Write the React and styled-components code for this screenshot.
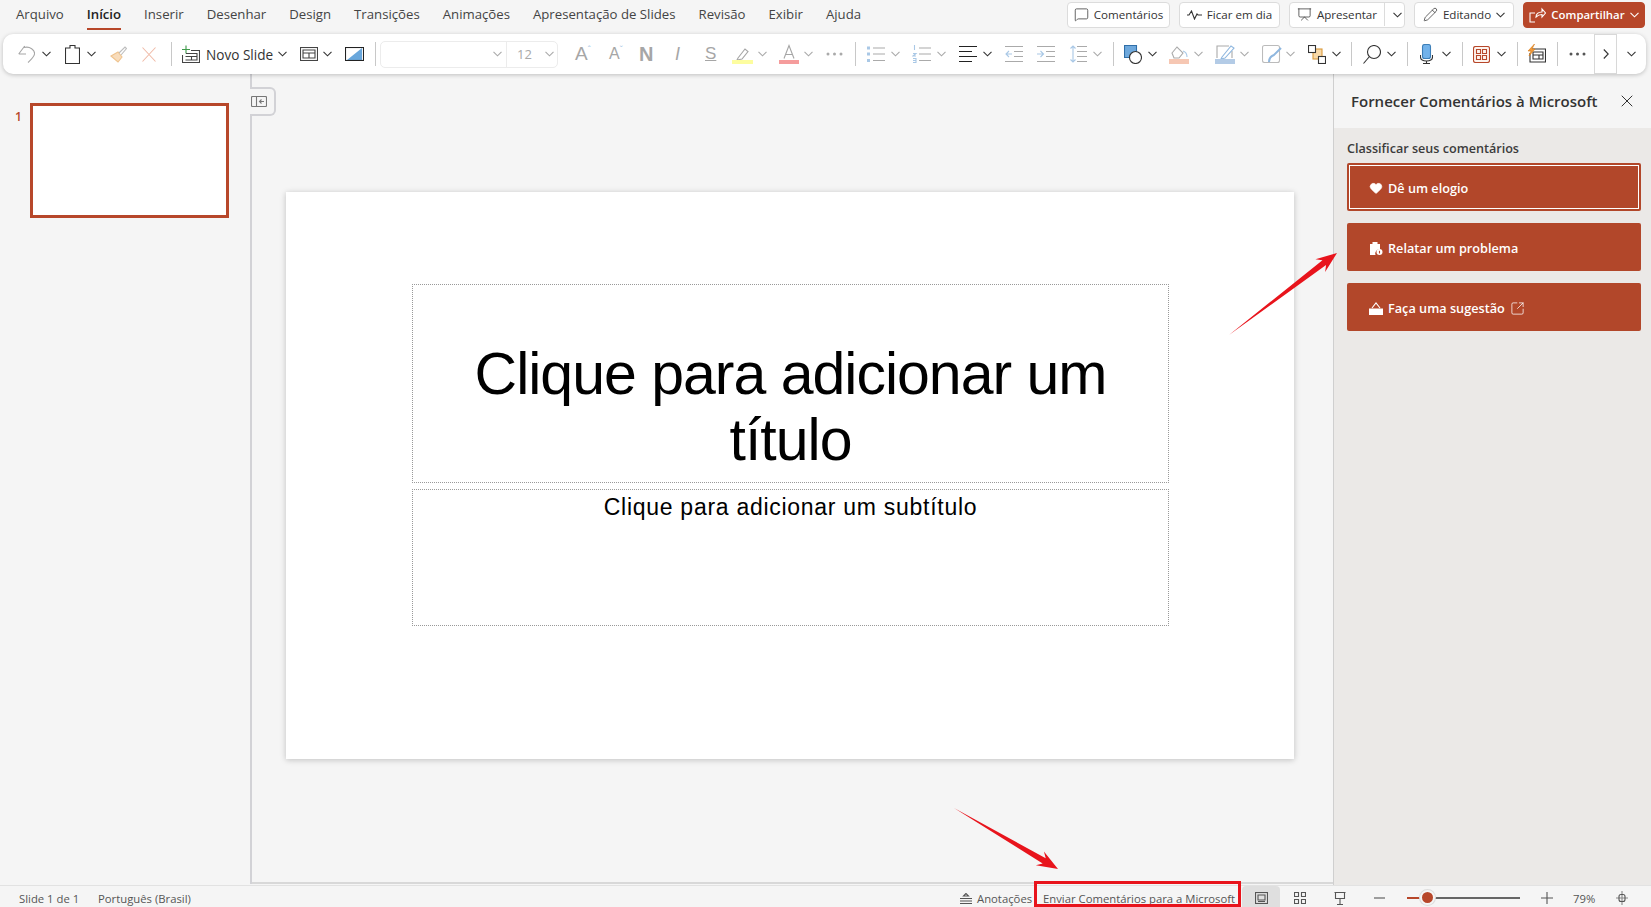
import React from "react";
import styled, { createGlobalStyle } from "styled-components";
import { Heart, X, SquareArrowOutUpRight, MessageSquare, Presentation, Pencil } from "lucide-react";

const UI_FONT = '"Open Sans", "Noto Sans", "Liberation Sans", sans-serif';
const BRAND = "#b7472a";
const DIM = "#a9a9a9";
const DARK = "#333";

const Global = createGlobalStyle`
  html, body { margin: 0; padding: 0; height: 100%; overflow: hidden; background: #f5f5f5; }
  body { font-family: ${UI_FONT}; color: #333; }
  * { box-sizing: border-box; }
`;

const Page = styled.div`
  position: relative;
  width: 1651px;
  height: 907px;
  display: flex;
  flex-direction: column;
  background: #f5f5f5;
  overflow: hidden;
`;

// top menu
const TopBar = styled.div`
  height: 34px;
  flex: none;
  display: flex;
  align-items: flex-start;
  padding: 2px 6px 0 16px;
`;
const Tabs = styled.nav`
  display: flex;
  gap: 23px;
  height: 28px;
  flex: 1;
  padding-top: 1px;
`;
const Tab = styled.div`
  position: relative;
  font-size: 13.2px;
  line-height: 22px;
  color: ${(p) => (p.$active ? "#222" : "#444")};
  font-weight: ${(p) => (p.$active ? 600 : 400)};
  white-space: nowrap;
  ${(p) =>
    p.$active &&
    `&::after { content: ""; position: absolute; left: 0; right: 0; top: 25px; height: 2px; background: ${BRAND}; }`}
`;
const TopActions = styled.div`
  display: flex;
  gap: 9px;
`;
const TopBtn = styled.div`
  height: 26px;
  width: ${(p) => p.$w}px;
  padding-bottom: 1px;
  display: flex;
  align-items: center;
  justify-content: center;
  gap: 5px;
  border: 1px solid #dcdcdc;
  border-radius: 4px;
  background: #fff;
  font-size: 11.6px;
  color: #333;
  white-space: nowrap;
`;
const SplitBtn = styled(TopBtn)`
  padding: 0 0 1px;
  justify-content: flex-start;
`;
const SplitMain = styled.div`
  width: 95px;
  height: 100%;
  display: flex;
  align-items: center;
  justify-content: center;
  gap: 5px;
  border-right: 1px solid #dcdcdc;
`;
const SplitArrow = styled.div`
  flex: 1;
  display: flex;
  align-items: center;
  justify-content: center;
`;
const ShareBtn = styled(TopBtn)`
  background: ${BRAND};
  border-color: ${BRAND};
  color: #fff;
  font-size: 11.4px;
  font-weight: 600;
`;

// ribbon
const Ribbon = styled.div`
  position: relative;
  z-index: 2;
  flex: none;
  height: 40px;
  margin: 0 5px 0 3px;
  padding-left: 15px;
  display: flex;
  align-items: center;
  background: #fff;
  border-radius: 10px;
  box-shadow: 0 1px 4px rgba(0, 0, 0, 0.22);
`;
const Sep = styled.div`
  flex: none;
  width: 1px;
  height: 24px;
  margin-left: ${(p) => p.$gap}px;
  background: #c8c8c8;
`;
const GlyphSvg = styled.svg`
  flex: none;
  display: block;
  margin-left: ${(p) => p.$gap || 0}px;
  fill: none;
  stroke-width: 1.1;
`;
const G = ({ w, h = 20, gap, children }) => (
  <GlyphSvg $gap={gap} width={w} height={h} viewBox={`0 0 ${w} ${h}`}>
    {children}
  </GlyphSvg>
);
const Chev = ({ gap, dim }) => (
  <G w={9} h={6} gap={gap}>
    <path d="M.5 .8 4.500 4.800 8.500 .8" stroke={dim ? DIM : DARK} />
  </G>
);
const RibbonText = styled.span`
  flex: none;
  width: ${(p) => p.$w}px;
  margin-left: ${(p) => p.$gap}px;
  font-size: 13.6px;
  color: #333;
  white-space: nowrap;
`;
const LetterTool = styled.span`
  flex: none;
  width: ${(p) => p.$w}px;
  margin-left: ${(p) => p.$gap}px;
  font-family: "Liberation Sans", sans-serif;
  font-size: ${(p) => p.$size || 18}px;
  font-weight: ${(p) => p.$weight || 400};
  font-style: ${(p) => p.$slant || "normal"};
  text-decoration: ${(p) => p.$deco || "none"};
  line-height: 20px;
  color: #a6a6a6;
  display: flex;
  white-space: nowrap;
`;
const Caret = styled.i`
  font-style: normal;
  font-size: 9px;
  line-height: 11px;
  color: #a9c8e6;
`;
const FontBox = styled.div`
  flex: none;
  width: 178px;
  height: 27px;
  margin-left: 4px;
  display: flex;
  border: 1px solid #ececec;
  border-radius: 5px;
`;
const FontName = styled.div`
  width: 126px;
  display: flex;
  align-items: center;
  justify-content: flex-end;
  padding-right: 4px;
  border-right: 1px solid #ececec;
`;
const FontSize = styled.div`
  flex: 1;
  display: flex;
  align-items: center;
  padding-left: 10px;
  font-size: 13px;
  color: #a9a9a9;
  gap: 13px;
`;
const OverflowBtn = styled.div`
  flex: none;
  width: 23px;
  height: 40px;
  margin-left: 8px;
  display: flex;
  align-items: center;
  justify-content: center;
  border: 1px solid #d8d8d8;
`;

// body
const Body = styled.div`
  flex: 1;
  min-height: 0;
  display: flex;
`;
const ThumbPane = styled.aside`
  position: relative;
  flex: none;
  width: 252px;
  padding: 29px 0 0 15px;
  display: flex;
  gap: 10px;
  border-right: 2px solid #d2d2d6;
  margin-bottom: 1px;
`;
const ThumbNum = styled.div`
  width: 5px;
  font-size: 12px;
  line-height: 27px;
  color: ${BRAND};
  font-weight: 600;
`;
const Thumb = styled.div`
  width: 199px;
  height: 115px;
  background: #fff;
  border: 3px solid ${BRAND};
`;
const CollapseTab = styled.div`
  position: absolute;
  left: 250px;
  top: 13px;
  width: 26px;
  height: 29px;
  display: flex;
  align-items: center;
  padding-left: 1px;
  background: #f5f5f5;
  border: 2px solid #d2d2d6;
  border-left: none;
  border-radius: 0 6px 6px 0;
`;
const Stage = styled.main`
  flex: 1;
  min-width: 0;
  padding: 118px 0 0 34px;
  margin-bottom: 1px;
  border-bottom: 2px solid #d8d8d8;
`;
const Slide = styled.div`
  width: 1008px;
  height: 567px;
  padding: 92px 125px 0 126px;
  display: flex;
  flex-direction: column;
  gap: 6px;
  background: #fff;
  box-shadow: 0 1px 6px rgba(0, 0, 0, 0.22);
`;
const Placeholder = styled.div`
  height: ${(p) => p.$h}px;
  display: flex;
  flex-direction: column;
  align-items: center;
  justify-content: ${(p) => p.$justify};
  padding: 0 30px;
  border: 1px dotted #999;
  font-family: "Liberation Sans", sans-serif;
  text-align: center;
  color: #000;
`;
const Title = styled.div`
  font-size: 59px;
  line-height: 66px;
  letter-spacing: -1px;
  padding-bottom: 9px;
`;
const Subtitle = styled.div`
  font-size: 23px;
  line-height: 35px;
  letter-spacing: 0.72px;
`;

// right pane
const SidePane = styled.aside`
  flex: none;
  width: 318px;
  display: flex;
  flex-direction: column;
  border-left: 1px solid #cfcfcf;
`;
const SideHead = styled.div`
  height: 54px;
  flex: none;
  display: flex;
  align-items: center;
  justify-content: space-between;
  padding: 0 14px 0 17px;
  font-size: 15px;
  font-weight: 600;
  color: #333;
  background: #f5f5f5;
`;
const SideBody = styled.div`
  flex: 1;
  padding: 11px 10px 0 13px;
  display: flex;
  flex-direction: column;
  background: #ebe9e7;
`;
const SideLabel = styled.div`
  font-size: 12.6px;
  font-weight: 600;
  line-height: 20px;
  margin-bottom: 4px;
  color: #3c3c3c;
`;
const ActionList = styled.div`
  display: flex;
  flex-direction: column;
  gap: 12px;
`;
const ActionBtn = styled.div`
  position: relative;
  height: 48px;
  display: flex;
  align-items: center;
  gap: 5px;
  padding: 2px 0 0 22px;
  background: #b2472a;
  border-radius: 2px;
  color: #fff;
  font-size: 12.7px;
  font-weight: 600;
  ${(p) =>
    p.$focused &&
    `&::after { content: ""; position: absolute; inset: 2px; border: 1px solid #fff; }`}
`;

// status bar
const StatusBar = styled.footer`
  flex: none;
  height: 22px;
  display: flex;
  align-items: center;
  padding: 3px 0 0 19px;
  font-size: 11.3px;
  color: #555;
  border-top: 1px solid #e2e2e2;
`;
const StatusText = styled.span`
  flex: none;
  width: ${(p) => p.$w}px;
  margin-left: ${(p) => p.$gap || 0}px;
  white-space: nowrap;
`;
const ViewTab = styled.div`
  flex: none;
  align-self: stretch;
  width: 38px;
  margin: -3px 0 0 7px;
  padding-top: 3px;
  display: flex;
  align-items: center;
  justify-content: center;
  background: #dfdfdf;
  border-radius: 4px 4px 0 0;
`;
const ZoomTrack = styled.div`
  position: relative;
  flex: none;
  width: 113px;
  height: 2px;
  margin-left: 22px;
  background: #666;
`;
const ZoomFill = styled.div`
  height: 2px;
  background: ${BRAND};
`;
const ZoomThumb = styled.div`
  position: absolute;
  top: -7px;
  width: 15px;
  height: 15px;
  border-radius: 50%;
  background: ${BRAND};
  border: 2px solid #f5f5f5;
  box-shadow: 0 0 0 1px #ddd;
`;

// annotations drawn on top of the screenshot
const Overlay = styled.svg`
  position: absolute;
  inset: 0;
  z-index: 5;
  pointer-events: none;
`;
const RedBox = styled.div`
  position: absolute;
  z-index: 5;
  left: 1034px;
  top: 881px;
  width: 207px;
  height: 26px;
  border: 3px solid #e8141c;
`;

const arrowPoints = (x1, y1, x2, y2) => {
  const len = Math.hypot(x2 - x1, y2 - y1);
  const ux = (x2 - x1) / len;
  const uy = (y2 - y1) / len;
  const at = (along, side) => `${x2 - ux * along - uy * side},${y2 - uy * along + ux * side}`;
  return [`${x1},${y1}`, at(16, 3), at(21, 8), `${x2},${y2}`, at(21, -8), at(16, -3)].join(" ");
};

const MENU = ["Arquivo", "Início", "Inserir", "Desenhar", "Design", "Transições", "Animações", "Apresentação de Slides", "Revisão", "Exibir", "Ajuda"];

const RibbonDots = ({ gap, color }) => (
  <G w={17} h={4} gap={gap}>
    <g fill={color} stroke="none">
      <circle cx="2" cy="2" r="1.500" />
      <circle cx="8.500" cy="2" r="1.500" />
      <circle cx="15" cy="2" r="1.500" />
    </g>
  </G>
);

const RibbonTools = () => (
  <Ribbon>
    <G w={17} h={19}>
      <path d="M.7 9 6.700 1M.7 9H8M6 2.500C12 1 17 5 16.500 9c-.4 3-3 5-6.500 8.500" stroke="#a6a6a6" />
    </G>
    <Chev gap={7} />
    <G w={15} gap={14}>
      <path d="M.5 4H5V1.500h5V4h4.500v15.500H.5z" stroke={DARK} />
    </G>
    <Chev gap={7} />
    <G w={17} h={18} gap={14}>
      <path d="M1 11 8 7l4 5-4 5z" fill="#f8dcbb" stroke="#efc38e" />
      <path d="M9 8 15 2l1.500 1.500L11 10" stroke="#bdbdbd" />
    </G>
    <G w={14} h={15} gap={15}>
      <path d="M.5 .5 13.500 14.500M13.500 .5 .5 14.500" stroke="#f0bba8" />
    </G>
    <Sep $gap={15} />
    <G w={18} h={19} gap={10}>
      <path d="M4 .5v8M0 4.500h8" stroke="#3f9a4b" />
      <path d="M9 5.500h8.500v12H.5V10" stroke="#444" />
      <path d="M4 8.500h11V15H3.500M3.500 11.500H15M9.500 11.500V15" stroke="#444" />
    </G>
    <RibbonText $w={68} $gap={6}>Novo Slide</RibbonText>
    <Chev gap={4} />
    <G w={18} h={14} gap={13}>
      <rect x=".5" y=".5" width="17" height="13" stroke="#444" />
      <path d="M3 3h12v8H3zM3 6h12M9 6v5" stroke="#444" />
    </G>
    <Chev gap={5} />
    <G w={19} h={14} gap={13}>
      <path d="M2 13 17 1v12z" fill="#69a7dc" stroke="none" />
      <rect x=".5" y=".5" width="18" height="13" stroke="#222" />
    </G>
    <Sep $gap={11} />
    <FontBox>
      <FontName>
        <Chev dim />
      </FontName>
      <FontSize>
        12
        <Chev dim />
      </FontSize>
    </FontBox>
    <LetterTool $w={18} $gap={17} $size={19}>
      A<Caret>ˆ</Caret>
    </LetterTool>
    <LetterTool $w={15} $gap={16} $size={16}>
      A<Caret>ˇ</Caret>
    </LetterTool>
    <LetterTool $w={15} $gap={15} $size={20} $weight={700}>N</LetterTool>
    <LetterTool $w={8} $gap={21} $size={18} $slant="italic">I</LetterTool>
    <LetterTool $w={12} $gap={22} $size={17} $deco="underline">S</LetterTool>
    <G w={21} gap={15}>
      <path d="M6 14 13 5l3 2.500-6 7.500-5 1z" stroke="#a6a6a6" />
      <rect y="16" width="21" height="4" fill="#fdfd9f" stroke="none" />
    </G>
    <Chev gap={5} dim />
    <G w={20} gap={12}>
      <path d="M5 14.500 10 1.500l5 13M6.500 10.500h7" stroke="#a6a6a6" />
      <rect y="16" width="20" height="4" fill="#f59c9c" stroke="none" />
    </G>
    <Chev gap={5} dim />
    <RibbonDots gap={13} color="#aaa" />
    <Sep $gap={12} />
    <G w={18} h={18} gap={11}>
      <path d="M0 1.500h3v3H0zM0 7.500h3v3H0zM0 14h3v3H0z" fill="#a9c8e6" stroke="none" />
      <path d="M6 3h12M6 9h12M6 15.500h12" stroke="#aaa" />
    </G>
    <Chev gap={6} dim />
    <G w={19} h={18} gap={12}>
      <path d="M2.500 0v5M1 8.500h3L1 11h3M1 13.500h3v4H1M1 15.500h3" stroke="#a9c8e6" />
      <path d="M7 3h12M7 9h12M7 15.500h12" stroke="#aaa" />
    </G>
    <Chev gap={6} dim />
    <G w={18} h={18} gap={13}>
      <path d="M0 1.500h18M0 6.500h13M0 11.500h18M0 16.500h13" stroke="#222" />
    </G>
    <Chev gap={6} />
    <G w={18} h={18} gap={13}>
      <path d="M0 1.500h18M9 6.500h9M9 11.500h9M0 16.500h18" stroke="#aaa" />
      <path d="M7 9H1M4 6 1 9l3 3" stroke="#a9c8e6" />
    </G>
    <G w={18} h={18} gap={14}>
      <path d="M0 1.500h18M9 6.500h9M9 11.500h9M0 16.500h18" stroke="#aaa" />
      <path d="M0 9h6M3.500 6 6.500 9l-3 3" stroke="#a9c8e6" />
    </G>
    <G w={17} h={18} gap={15}>
      <path d="M7 1.500h10M7 6.500h10M7 11.500h10M7 16.500h10" stroke="#aaa" />
      <path d="M3 1v16M.5 3.500 3 1l2.500 2.500M.5 14.500 3 17l2.500-2.500" stroke="#a9c8e6" />
    </G>
    <Chev gap={6} dim />
    <Sep $gap={11} />
    <G w={18} h={19} gap={10}>
      <path d="M.5 .5h12v12H.5z" fill="#6ea8dc" stroke="#2f6ea8" />
      <circle cx="11.500" cy="12.500" r="6" fill="#fff" stroke="#333" />
    </G>
    <Chev gap={6} />
    <G w={20} gap={12}>
      <path d="M3 9 8 3l6 6-4 5H5z" stroke="#aaa" />
      <path d="M14 7c3 1 4 3 4 6" stroke="#a9c8e6" />
      <rect y="15" width="20" height="5" fill="#f6c7b3" stroke="none" />
    </G>
    <Chev gap={5} dim />
    <G w={20} gap={12}>
      <path d="M2 14V2h12M17 7v7" stroke="#aaa" />
      <path d="M7 13 16 2l3 2-9 10-4 1z" stroke="#8fb7df" />
      <rect y="15" width="20" height="5" fill="#b3cbe6" stroke="none" />
    </G>
    <Chev gap={5} dim />
    <G w={20} gap={13}>
      <rect x=".5" y="1.500" width="17" height="17" rx="2" stroke="#bbb" />
      <path d="M7 18c0-4 2-6 5-7l7-7" stroke="#8fb7df" strokeWidth="2" />
    </G>
    <Chev gap={4} dim />
    <G w={18} h={19} gap={13}>
      <rect x="5" y="4" width="9" height="10" fill="#f8d9a8" stroke="#d99a3c" />
      <rect x=".5" y=".5" width="7" height="7" fill="#fff" stroke="#333" />
      <rect x="10.500" y="11.500" width="7" height="7" fill="#fff" stroke="#333" />
    </G>
    <Chev gap={6} />
    <Sep $gap={10} />
    <G w={18} h={19} gap={11}>
      <circle cx="11" cy="7" r="6.500" stroke="#333" />
      <path d="M6.500 11.500 .5 18.500" stroke="#333" />
    </G>
    <Chev gap={6} />
    <Sep $gap={11} />
    <G w={13} h={20} gap={12}>
      <rect x="2.500" y=".5" width="8" height="14" rx="2" fill="#72b2ea" stroke="#3d7fb8" />
      <path d="M.5 11v2c0 3 3 4 6 4s6-1 6-4v-2M6.500 17v2.500M3 19.500h7" stroke="#333" />
    </G>
    <Chev gap={9} />
    <Sep $gap={11} />
    <G w={17} h={17} gap={10}>
      <rect x=".5" y=".5" width="16" height="16" rx="2" fill="#fdf4ef" stroke={BRAND} />
      <path d="M3.500 3.500h4v4h-4zM9.500 3.500h4v4h-4zM3.500 9.500h4v4h-4zM9.500 9.500h4v4h-4z" stroke={BRAND} />
    </G>
    <Chev gap={7} />
    <Sep $gap={11} />
    <G w={19} h={20} gap={9}>
      <path d="M5 5h13.500v13H3V9" stroke="#333" />
      <path d="M6 8h10v7H6zM6 11h10M12 11v4" stroke="#333" />
      <path d="M7.500 0 1 7h3L2 12l6-7H5z" fill="#f09a3a" stroke="#d97a16" strokeWidth=".6" />
    </G>
    <Sep $gap={11} />
    <RibbonDots gap={11} color="#555" />
    <OverflowBtn>
      <G w={6} h={10}>
        <path d="M.8 .5 5.200 5 .8 9.500" stroke={DARK} />
      </G>
    </OverflowBtn>
    <Chev gap={10} />
  </Ribbon>
);

const App = () => (
  <Page>
    <Global />
    <TopBar>
      <Tabs>
        {MENU.map((m) => (
          <Tab key={m} $active={m === "Início"}>{m}</Tab>
        ))}
      </Tabs>
      <TopActions>
        <TopBtn $w={103}>
          <MessageSquare size={15} strokeWidth={1.2} />
          Comentários
        </TopBtn>
        <TopBtn $w={101}>
          <G w={15} h={10}>
            <path d="M0 5h2l2.500-4 3 8 2.500-5 1 1h4" stroke={DARK} />
          </G>
          Ficar em dia
        </TopBtn>
        <SplitBtn $w={116}>
          <SplitMain>
            <Presentation size={15} strokeWidth={1.2} />
            Apresentar
          </SplitMain>
          <SplitArrow>
            <Chev />
          </SplitArrow>
        </SplitBtn>
        <TopBtn $w={100}>
          <Pencil size={15} strokeWidth={1.2} />
          Editando
          <Chev />
        </TopBtn>
        <ShareBtn $w={122}>
          <G w={17} h={16}>
            <path d="M6 15H1V6h5M7 10c0-3 2-5 6-5V2l3.500 4L13 10V7.500C10 7.500 8.500 8.500 7 10z" stroke="#fff" />
          </G>
          Compartilhar
          <G w={9} h={6}>
            <path d="M.5 .8 4.500 4.800 8.500 .8" stroke="#fff" />
          </G>
        </ShareBtn>
      </TopActions>
    </TopBar>

    <RibbonTools />

    <Body>
      <ThumbPane>
        <ThumbNum>1</ThumbNum>
        <Thumb />
        <CollapseTab>
          <G w={16} h={11}>
            <rect x=".5" y=".5" width="15" height="10" rx="1" stroke="#777" />
            <path d="M5.500 .5v10M13 5.500H8.500M10.500 3.500l-2 2 2 2" stroke="#777" />
          </G>
        </CollapseTab>
      </ThumbPane>
      <Stage>
        <Slide>
          <Placeholder $h={199} $justify="flex-end">
            <Title>
              Clique para adicionar um
              <br />
              título
            </Title>
          </Placeholder>
          <Placeholder $h={137} $justify="flex-start">
            <Subtitle>Clique para adicionar um subtítulo</Subtitle>
          </Placeholder>
        </Slide>
      </Stage>
      <SidePane>
        <SideHead>
          Fornecer Comentários à Microsoft
          <X size={20} strokeWidth={1.2} />
        </SideHead>
        <SideBody>
          <SideLabel>Classificar seus comentários</SideLabel>
          <ActionList>
            <ActionBtn $focused>
              <Heart size={14} fill="#fff" strokeWidth={1} />
              Dê um elogio
            </ActionBtn>
            <ActionBtn>
              <G w={14} h={15}>
                <path d="M1 3h2.500V1h5v2H11v5.500A4 4 0 0 0 6.500 14H1z" fill="#fff" stroke="none" />
                <circle cx="10.500" cy="11" r="3" fill="#fff" stroke="none" />
                <path d="M10.500 9.800v2.600" stroke={BRAND} />
              </G>
              Relatar um problema
            </ActionBtn>
            <ActionBtn>
              <G w={14} h={13}>
                <path d="M0 6.500h14V13H0z" fill="#fff" stroke="none" />
                <path d="M3 6 7 1l4 5" stroke="#fff" />
              </G>
              Faça uma sugestão
              <SquareArrowOutUpRight size={15} strokeWidth={1.2} />
            </ActionBtn>
          </ActionList>
        </SideBody>
      </SidePane>
    </Body>

    <StatusBar>
      <StatusText $w={62}>Slide 1 de 1</StatusText>
      <StatusText $w={100} $gap={17}>Português (Brasil)</StatusText>
      <G w={12} h={11} gap={762}>
        <path d="M6 .5 3.500 3h5zM0 5.500h12M0 8h12M0 10.500h12" stroke="#555" />
      </G>
      <StatusText $w={58} $gap={5}>Anotações</StatusText>
      <StatusText $w={192} $gap={8}>Enviar Comentários para a Microsoft</StatusText>
      <ViewTab>
        <G w={13} h={12}>
          <rect x=".5" y=".5" width="12" height="11" stroke="#555" />
          <path d="M3 3h7v5H3zM3 9.500h7" stroke="#555" />
        </G>
      </ViewTab>
      <G w={12} h={12} gap={14}>
        <path d="M.5 .5h4v4h-4zM7.500 .5h4v4h-4zM.5 7.500h4v4h-4zM7.500 7.500h4v4h-4z" stroke="#555" />
      </G>
      <G w={12} h={13} gap={28}>
        <path d="M.5 .5h11M1.500 .5h9v6h-9zM6 6.500v6M3 12.500h6" stroke="#555" />
      </G>
      <G w={11} h={2} gap={28}>
        <path d="M0 1h11" stroke="#555" />
      </G>
      <ZoomTrack>
        <ZoomFill style={{ width: "12px" }} />
        <ZoomThumb style={{ left: "13px" }} />
      </ZoomTrack>
      <G w={12} h={12} gap={21}>
        <path d="M6 0v12M0 6h12" stroke="#555" />
      </G>
      <StatusText $w={24} $gap={20}>79%</StatusText>
      <G w={12} h={14} gap={19}>
        <path d="M6 0v14M0 7h12" stroke="#888" />
        <rect x="3" y="3.500" width="6" height="7" rx="2" stroke="#555" />
      </G>
    </StatusBar>

    <RedBox />
    <Overlay width="1651" height="907">
      <polygon points={arrowPoints(1229, 335, 1337, 253)} fill="#e8141c" />
      <polygon points={arrowPoints(954, 808, 1058, 869)} fill="#e8141c" />
    </Overlay>
  </Page>
);

export default App;
